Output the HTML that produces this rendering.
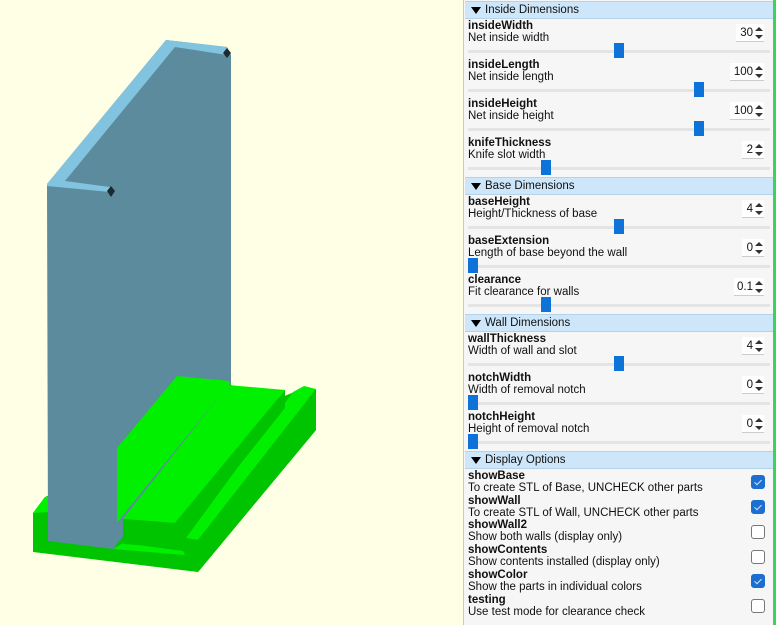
<!DOCTYPE html>
<html><head><meta charset="utf-8"><style>
*{margin:0;padding:0;box-sizing:border-box}
body{width:776px;height:625px;background:#ffffe5;position:relative;overflow:hidden;font-family:Tahoma,"Liberation Sans",sans-serif;font-size:11.5px;color:#111}
#panel{position:absolute;left:463px;top:0;width:311px;height:625px;background:#f6f6f6;border-left:1px solid #c8c8c8;border-right:1px solid #c8c8c8}
#gl{position:absolute;left:773px;top:0;width:3px;height:625px;background:#3bd35a}
.h{position:absolute;left:1px;width:308px;height:18px;background:#cde6fa;border-top:1px solid #b4d2ea;border-bottom:1px solid #b4d2ea;padding-left:20px;line-height:16px}
.h:before{content:"";position:absolute;left:6px;top:5px;border-left:5px solid transparent;border-right:5px solid transparent;border-top:7px solid #000}
.it{position:absolute;left:4px;width:302px}
.n{font-weight:bold;line-height:12px}
.d{line-height:13px}
.tr{position:absolute;left:0;width:302px;height:3px;background:#e4e4e4}
.th{position:absolute;width:10px;height:15px;background:#0e73d8}
.sp{position:absolute;right:6px;height:18px;background:#fff;border-bottom:1px solid #ccc;padding-right:11px;line-height:18px;text-align:right}
.sp:after{content:"";position:absolute;right:1px;top:3px;border-left:4px solid transparent;border-right:4px solid transparent;border-bottom:4px solid #333}
.sp:before{content:"";position:absolute;right:1px;top:11px;border-left:4px solid transparent;border-right:4px solid transparent;border-top:4px solid #333}
.cb{position:absolute;right:5px;width:14px;height:14px;border:1px solid #777;border-radius:3px;background:#fff}
.cb.on{background:#1c6fce;border-color:#1c6fce}
.cb.on:after{content:"";position:absolute;left:4px;top:2px;width:3px;height:6px;border-right:1px solid #cfe3ff;border-bottom:1px solid #cfe3ff;transform:rotate(45deg)}
</style></head><body>
<svg width="463" height="625" style="position:absolute;left:0;top:0">
<!-- base dark silhouette -->
<polygon points="33,513 45,497 306,387 316,390 316,430 198,572 33,552" fill="#00c400"/>
<polygon points="33,513 45,497 49,497 49,512" fill="#00f000"/>
<!-- wall -->
<polygon points="47,184 166,40 227,47 231,55 231,400 113,549 48,541" fill="#5b8b9c"/>
<polygon points="47,184 166,40 227,47 227,55 175,47 65,181 110,187 110,192 47,186" fill="#82c3e0"/>
<polygon points="227,48 231,53 227,58 223,53" fill="#1b2a30"/>
<polygon points="111,186 115,191 111,197 107,191" fill="#1b2a30"/>
<!-- base top strip near wall bottom -->
<polygon points="113,549 123,543 183,551 185,555 113,549" fill="#00f000"/>
<!-- rail -->
<polygon points="186,538 293,392 304,386 316,389 198,540" fill="#00f000"/>
<polygon points="198,540 316,389 316,430 198,572" fill="#00c400"/>
<polygon points="186,538 198,540 198,572 186,560" fill="#00c400"/>
<!-- left block -->
<polygon points="117,448 177,376 229,381 232,386 122,518 117,522" fill="#00f000"/>
<polygon points="229,384 233,386 124,521 120,519" fill="#5b8b9c"/>
<!-- right block -->
<polygon points="228,385 285,390 175,523 123,519" fill="#00f000"/>
<polygon points="123,519 175,523 175,548 123,544" fill="#00c400"/>
<polygon points="175,523 285,390 285,408 183,536 183,550 175,548" fill="#00c400"/>
</svg>
<div id="panel">
<div class="h" style="top:1px">Inside Dimensions</div>
<div class="it" style="top:20px"><div class="n">insideWidth</div><div class="d">Net inside width</div><div class="sp" style="top:4px;width:28px">30</div><div class="tr" style="top:30px"></div><div class="th" style="left:146px;top:23px"></div></div>
<div class="it" style="top:59px"><div class="n">insideLength</div><div class="d">Net inside length</div><div class="sp" style="top:4px;width:34px">100</div><div class="tr" style="top:30px"></div><div class="th" style="left:226px;top:23px"></div></div>
<div class="it" style="top:98px"><div class="n">insideHeight</div><div class="d">Net inside height</div><div class="sp" style="top:4px;width:34px">100</div><div class="tr" style="top:30px"></div><div class="th" style="left:226px;top:23px"></div></div>
<div class="it" style="top:137px"><div class="n">knifeThickness</div><div class="d">Knife slot width</div><div class="sp" style="top:4px;width:22px">2</div><div class="tr" style="top:30px"></div><div class="th" style="left:73px;top:23px"></div></div>
<div class="h" style="top:177px">Base Dimensions</div>
<div class="it" style="top:196px"><div class="n">baseHeight</div><div class="d">Height/Thickness of base</div><div class="sp" style="top:4px;width:22px">4</div><div class="tr" style="top:30px"></div><div class="th" style="left:146px;top:23px"></div></div>
<div class="it" style="top:235px"><div class="n">baseExtension</div><div class="d">Length of base beyond the wall</div><div class="sp" style="top:4px;width:22px">0</div><div class="tr" style="top:30px"></div><div class="th" style="left:0px;top:23px"></div></div>
<div class="it" style="top:274px"><div class="n">clearance</div><div class="d">Fit clearance for walls</div><div class="sp" style="top:4px;width:30px">0.1</div><div class="tr" style="top:30px"></div><div class="th" style="left:73px;top:23px"></div></div>
<div class="h" style="top:314px">Wall Dimensions</div>
<div class="it" style="top:333px"><div class="n">wallThickness</div><div class="d">Width of wall and slot</div><div class="sp" style="top:4px;width:22px">4</div><div class="tr" style="top:30px"></div><div class="th" style="left:146px;top:23px"></div></div>
<div class="it" style="top:372px"><div class="n">notchWidth</div><div class="d">Width of removal notch</div><div class="sp" style="top:4px;width:22px">0</div><div class="tr" style="top:30px"></div><div class="th" style="left:0px;top:23px"></div></div>
<div class="it" style="top:411px"><div class="n">notchHeight</div><div class="d">Height of removal notch</div><div class="sp" style="top:4px;width:22px">0</div><div class="tr" style="top:30px"></div><div class="th" style="left:0px;top:23px"></div></div>
<div class="h" style="top:451px">Display Options</div>
<div class="it" style="top:470px"><div class="n">showBase</div><div class="d">To create STL of Base, UNCHECK other parts</div><div class="cb on" style="top:5px"></div></div>
<div class="it" style="top:495px"><div class="n">showWall</div><div class="d">To create STL of Wall, UNCHECK other parts</div><div class="cb on" style="top:5px"></div></div>
<div class="it" style="top:519px"><div class="n">showWall2</div><div class="d">Show both walls (display only)</div><div class="cb" style="top:6px"></div></div>
<div class="it" style="top:544px"><div class="n">showContents</div><div class="d">Show contents installed (display only)</div><div class="cb" style="top:6px"></div></div>
<div class="it" style="top:569px"><div class="n">showColor</div><div class="d">Show the parts in individual colors</div><div class="cb on" style="top:5px"></div></div>
<div class="it" style="top:594px"><div class="n">testing</div><div class="d">Use test mode for clearance check</div><div class="cb" style="top:5px"></div></div>
</div>
<div id="gl"></div>
</body></html>
